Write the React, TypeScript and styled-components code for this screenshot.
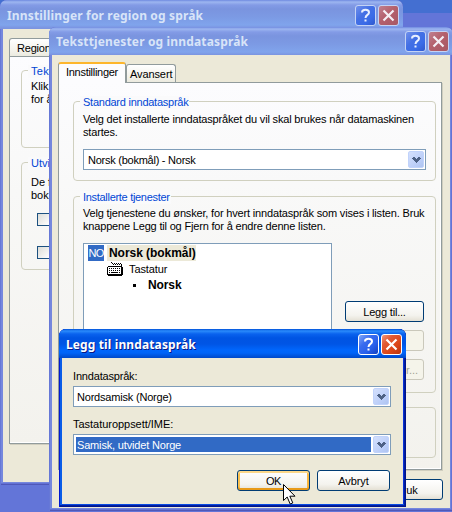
import React from "react";
import styled, { createGlobalStyle, css } from "styled-components";

const GlobalStyle = createGlobalStyle`
  *, *::before, *::after { box-sizing: border-box; }
  html, body { margin: 0; padding: 0; overflow: hidden; }
  body { font: 11px/13px "Liberation Sans", Arial, sans-serif; color: #000; }
`;

const Desktop = styled.main`
  position: relative;
  width: 452px;
  height: 512px;
  overflow: hidden;
  background: linear-gradient(#446fd1 0 13px, #6375d8 13px);
`;

/* Windows float freely over the desktop. */
const Frame = styled.section<{ $x: number; $y: number; $w: number; $h: number; $active?: boolean }>`
  position: absolute;
  left: ${(p) => p.$x}px;
  top: ${(p) => p.$y}px;
  width: ${(p) => p.$w}px;
  height: ${(p) => p.$h}px;
  display: flex;
  flex-direction: column;
  padding: 0 3px 3px;
  border-radius: 7px 7px 0 0;
  overflow: hidden;
  ${(p) =>
    p.$active
      ? css`
          background: #0831d9;
          box-shadow: inset 1px 0 #0019cf, inset -1px 0 #00138c, inset 0 -1px #00138c,
            inset -2px 0 #001ea0, inset 0 -2px #001ea0, inset 3px 0 #0a5ce8, inset 0 -3px #0a4ae0;
        `
      : css`
          background: #7587dd;
          box-shadow: inset 1px 0 #6678d6, inset -1px 0 #5058b8, inset 0 -1px #5058b8,
            inset -2px 0 #6472d4, inset 0 -2px #6472d4;
        `}
`;

const TitleBar = styled.header<{ $active?: boolean; $h: number; $top: number }>`
  flex: none;
  height: ${(p) => p.$h}px;
  margin: 0 -3px;
  padding: ${(p) => p.$top}px 4px 0 7px;
  display: flex;
  align-items: flex-start;
  gap: 2px;
  background: ${(p) =>
    p.$active
      ? "linear-gradient(#0050d8 0, #2a8bfb 2px, #0a62ee 5px, #0054e3 9px, #0055e5 15px, #0066fc 21px, #0064f8 24px, #0048c8 29px)"
      : "linear-gradient(#6f8ae0 0, #9db6f0 2px, #839be6 5px, #7a94df 9px, #7c9ae4 17px, #80a4ec 25px, #7b94e0 28px)"};
`;

const Title = styled.h1<{ $active?: boolean; $ls: number }>`
  flex: 1;
  margin: 0;
  font: bold 12px/22px "Noto Sans", "Open Sans", sans-serif;
  letter-spacing: ${(p) => p.$ls}px;
  white-space: nowrap;
  color: ${(p) => (p.$active ? "#fff" : "#d8e4f8")};
  text-shadow: ${(p) => (p.$active ? "1px 1px #0a1883" : "none")};
`;

const TitleButton = styled.button<{ $active?: boolean; $close?: boolean }>`
  width: 21px;
  height: 21px;
  padding: 0;
  display: grid;
  place-items: center;
  border: 1px solid ${(p) => (p.$active ? "#fff" : "#c4d3f5")};
  border-radius: 3px;
  background: ${(p) =>
    p.$close
      ? p.$active
        ? "linear-gradient(135deg, #f0987c 0, #e25a34 30%, #dc4618 65%, #b83410 100%)"
        : "linear-gradient(135deg, #c08090 0, #b4606c 45%, #a85864 100%)"
      : p.$active
        ? "linear-gradient(135deg, #80a8f8 0, #3a6cee 35%, #2860ec 65%, #1440c0 100%)"
        : "linear-gradient(135deg, #7090ec 0, #4470e4 40%, #3a6ce8 70%, #3058cc 100%)"};
  svg { display: block; }
`;

const Body = styled.div<{ $pad: string }>`
  flex: 1;
  min-height: 0;
  display: flex;
  flex-direction: column;
  background: #ece9d8;
  padding: ${(p) => p.$pad};
`;

const Tabs = styled.nav`
  display: flex;
  align-items: flex-end;
  height: 20px;
`;

const Tab = styled.div<{ $selected?: boolean; $w: number; $ls?: number }>`
  width: ${(p) => p.$w}px;
  height: 18px;
  padding-left: ${(p) => (p.$selected ? 7 : p.$w > 60 ? 7 : 3)}px;
  border: 1px solid #919b9c;
  border-bottom: 0;
  border-radius: 3px 3px 0 0;
  background: linear-gradient(#fff, #f3f2ea 70%, #ebeadf);
  line-height: 18px;
  white-space: nowrap;
  letter-spacing: ${(p) => p.$ls ?? 0}px;
  ${(p) =>
    p.$selected &&
    css`
      height: 21px;
      margin-bottom: -1px;
      border-top: 2px solid #fdb62c;
      background: #fcfcfe;
      line-height: 17px;
      z-index: 1;
    `}
`;

const Panel = styled.div<{ $h: number; $pad: string }>`
  height: ${(p) => p.$h}px;
  border: 1px solid #919b9c;
  box-shadow: 1px 1px #d0cebf, inset -1px -1px #fff;
  background: linear-gradient(#fcfcfe, #f8f8f7 35%, #f3f2ed);
  padding: ${(p) => p.$pad};
`;

const Group = styled.fieldset<{ $h: number; $mb: number }>`
  min-width: 0;
  height: ${(p) => p.$h}px;
  margin: 0 0 ${(p) => p.$mb}px;
  padding: 0 9px;
  border: 1px solid #d0d0bf;
  border-radius: 4px;
`;

const Caption = styled.div<{ $w: number; $ls: number }>`
  width: ${(p) => p.$w}px;
  height: 13px;
  margin: -6px 0 0 -3px;
  padding-left: 3px;
  background: #fafafb;
  color: #0046d5;
  white-space: nowrap;
  letter-spacing: ${(p) => p.$ls}px;
`;

const Line = styled.div<{ $ls: number }>`
  height: 13px;
  white-space: nowrap;
  letter-spacing: ${(p) => p.$ls}px;
`;

const Lines = styled.div<{ $mt: number; $mb: number }>`
  margin: ${(p) => p.$mt}px 0 ${(p) => p.$mb}px;
`;

const Checkbox = styled.div<{ $mb: number }>`
  width: 13px;
  height: 13px;
  margin: 0 0 ${(p) => p.$mb}px 6px;
  border: 1px solid #1c5180;
  background: linear-gradient(135deg, #dcdcd7, #fff);
`;

const Select = styled.div`
  height: 21px;
  padding: 2px 1px 2px 2px;
  display: flex;
  gap: 2px;
  border: 1px solid #7f9db9;
  background: #fff;
`;

const Value = styled.span<{ $selected?: boolean; $ls: number; $indent?: number }>`
  flex: 1;
  height: 15px;
  padding-left: ${(p) => p.$indent ?? 1}px;
  line-height: 16px;
  white-space: nowrap;
  letter-spacing: ${(p) => p.$ls}px;
  color: ${(p) => (p.$selected ? "#fff" : "#000")};
  background: ${(p) => (p.$selected ? "#316ac5" : "transparent")};
`;

const ArrowBox = styled.span`
  width: 16px;
  height: 17px;
  margin-top: -1px;
  display: grid;
  place-items: center;
  border: 1px solid #c1d3fb;
  border-radius: 2px;
  background: linear-gradient(135deg, #d4e0fd, #bacdf8 70%, #aec4f0);
`;

const ServiceRow = styled.div`
  display: flex;
  gap: 13px;
`;

const ListBox = styled.div`
  width: 249px;
  height: 100px;
  padding: 1px 4px;
  border: 1px solid #7f9db9;
  background: #fff;
`;

const ListItem = styled.div<{ $indent: number; $gap: number }>`
  height: 16px;
  display: flex;
  align-items: center;
  gap: ${(p) => p.$gap}px;
  padding-left: ${(p) => p.$indent}px;
`;

const LangBadge = styled.span`
  width: 16px;
  height: 16px;
  line-height: 17px;
  text-align: center;
  letter-spacing: -0.8px;
  color: #fff;
  background: #316ac5;
`;

const ItemText = styled.span<{ $bold?: boolean; $lit?: boolean; $ls: number }>`
  height: 16px;
  line-height: 17px;
  white-space: nowrap;
  font-size: ${(p) => (p.$bold ? 12 : 11)}px;
  font-weight: ${(p) => (p.$bold ? "bold" : "normal")};
  letter-spacing: ${(p) => p.$ls}px;
  ${(p) => p.$lit && css`width: 89px; padding-left: 2px; background: #ece9d8;`}
`;

const Bullet = styled.span`
  width: 3px;
  height: 3px;
  background: #000;
`;

const ButtonColumn = styled.div`
  width: 79px;
  padding-top: 58px;
  display: flex;
  flex-direction: column;
  gap: 8px;
`;

const Button = styled.button<{ $w: number; $hot?: boolean; $ls?: number }>`
  width: ${(p) => p.$w}px;
  height: 21px;
  padding: 0;
  border: 1px solid #003c74;
  border-radius: 3px;
  background: linear-gradient(#fff, #f4f3ee 70%, #e4e0d4);
  box-shadow: ${(p) => (p.$hot ? "inset 0 2px #fcd88a, inset 0 -2px #e89a18, inset 2px 0 #f9c050, inset -2px 0 #f9b840" : "none")};
  font: inherit;
  line-height: 18px;
  letter-spacing: ${(p) => p.$ls ?? 0}px;
  color: #000;
  &:disabled {
    border-color: #cac8bb;
    background: #f5f4ea;
    color: #a1a192;
  }
`;

const Footer = styled.div<{ $mt: number; $right: number }>`
  margin: ${(p) => p.$mt}px ${(p) => p.$right}px 0 0;
  display: flex;
  justify-content: flex-end;
  gap: 7px;
`;

const Pointer = styled.svg`
  position: absolute;
  left: 283px;
  top: 484px;
`;

const Chevron = () => (
  <ArrowBox>
    <svg width="9" height="6" viewBox="0 0 9 6" shapeRendering="crispEdges">
      <path fill="#4d6185" d="M1 0h2v1h1v1h1V1h1V0h2v1h1v1H8v1H7v1H6v1H5v1H4V5H3V4H2V3H1V2H0V1h1z" />
    </svg>
  </ArrowBox>
);

const Keyboard = () => (
  <svg width="16" height="14" viewBox="0 0 16 14" shapeRendering="crispEdges">
    <path fill="#000" d="M4 0h1v1H4zM5 1h1v1H5zM6 2h1v1H6zM7 1h1v1H7zM8 2h1v1H8zM9 1h1v1H9zM10 2h1v1h-1zM11 1h1v1h-1zM12 2h1v1h-1zM13 1h1v1h-1zM14 2h1v2h-1z" />
    <path fill="#000" d="M1 4h14v1h1v8h-1v1H1v-1H0V5h1z" />
    <path fill="#fff" d="M1 5h13v7H1z" />
    <path fill="#000" d="M2 6h1v1H2zM4 6h1v1H4zM6 6h1v1H6zM8 6h1v1H8zM10 6h1v1h-1zM12 6h1v1h-1zM2 8h1v1H2zM4 8h1v1H4zM6 8h1v1H6zM8 8h1v1H8zM10 8h1v1h-1zM12 8h1v1h-1zM2 10h1v1H2zM4 10h7v1H4zM12 10h1v1h-1z" />
  </svg>
);

function Chrome({ title, ls, active, height, top }: { title: string; ls: number; active?: boolean; height: number; top: number }) {
  return (
    <TitleBar $active={active} $h={height} $top={top}>
      <Title $active={active} $ls={ls}>{title}</Title>
      <TitleButton $active={active} aria-label="Hjelp">
        <svg width="13" height="15" viewBox="0 0 13 15" fill="none" stroke={active ? "#fff" : "#e8efff"} strokeWidth="2">
          <path d="M3 4.500C3 .8 10 .8 10 4.500 10 7 6.500 6.800 6.500 10M6.500 11.500v2" />
        </svg>
      </TitleButton>
      <TitleButton $active={active} $close aria-label="Lukk">
        <svg width="13" height="13" viewBox="0 0 13 13" stroke={active ? "#fff" : "#f4eef4"} strokeWidth="2.200">
          <path d="M1.500 1.500l10 10M11.500 1.500l-10 10" />
        </svg>
      </TitleButton>
    </TitleBar>
  );
}

export default function App() {
  return (
    <>
      <GlobalStyle />
      <Desktop>
        <Frame $x={0} $y={0} $w={403} $h={485}>
          <Chrome title="Innstillinger for region og språk" ls={0.16} height={29} top={5} />
          <Body $pad="7px 6px 0">
            <Tabs><Tab $w={90} $ls={-0.2}>Region</Tab></Tabs>
            <Panel $h={388} $pad="13px 11px">
              <Group $h={78} $mb={14}>
                <Caption $w={60} $ls={0.3}>Tek</Caption>
                <Lines $mt={2} $mb={0}>
                  <Line $ls={-0.1}>Klik</Line>
                  <Line $ls={-0.1}>for å</Line>
                </Lines>
              </Group>
              <Group $h={108} $mb={0}>
                <Caption $w={60} $ls={0}>Utvi</Caption>
                <Lines $mt={6} $mb={11}>
                  <Line $ls={0}>De f</Line>
                  <Line $ls={0}>bok</Line>
                </Lines>
                <Checkbox $mb={20} />
                <Checkbox $mb={0} />
              </Group>
            </Panel>
          </Body>
        </Frame>

        <Frame $x={49} $y={27} $w={404} $h={484}>
          <Chrome title="Teksttjenester og inndataspråk" ls={0.15} height={28} top={4} />
          <Body $pad="7px 8px 0 6px">
            <Tabs>
              <Tab $selected $w={68} $ls={-0.28}>Innstillinger</Tab>
              <Tab $w={50} $ls={-0.1}>Avansert</Tab>
            </Tabs>
            <Panel $h={388} $pad="18px 5px 0 14px">
              <Group $h={80} $mb={15}>
                <Caption $w={109} $ls={-0.25}>Standard inndataspråk</Caption>
                <Lines $mt={4} $mb={10}>
                  <Line $ls={-0.17}>Velg det installerte inndataspråket du vil skal brukes når datamaskinen</Line>
                  <Line $ls={-0.17}>startes.</Line>
                </Lines>
                <Select><Value $ls={-0.25} $indent={2}>Norsk (bokmål) - Norsk</Value><Chevron /></Select>
              </Group>
              <Group $h={197} $mb={14}>
                <Caption $w={91} $ls={-0.3}>Installerte tjenester</Caption>
                <Lines $mt={3} $mb={10}>
                  <Line $ls={-0.17}>Velg tjenestene du ønsker, for hvert inndataspråk som vises i listen. Bruk</Line>
                  <Line $ls={-0.18}>knappene Legg til og Fjern for å endre denne listen.</Line>
                </Lines>
                <ServiceRow>
                  <ListBox>
                    <ListItem $indent={0} $gap={3}>
                      <LangBadge>NO</LangBadge>
                      <ItemText $bold $lit $ls={-0.05}>Norsk (bokmål)</ItemText>
                    </ListItem>
                    <ListItem $indent={19} $gap={6}>
                      <Keyboard />
                      <ItemText $ls={-0.1}>Tastatur</ItemText>
                    </ListItem>
                    <ListItem $indent={45} $gap={12}>
                      <Bullet />
                      <ItemText $bold $ls={-0.1}>Norsk</ItemText>
                    </ListItem>
                  </ListBox>
                  <ButtonColumn>
                    <Button $w={79} $ls={-0.2}>Legg til...</Button>
                    <Button $w={79} disabled>Fjern</Button>
                    <Button $w={79} disabled>Egenskaper...</Button>
                  </ButtonColumn>
                </ServiceRow>
              </Group>
              <Group $h={51} $mb={0} />
            </Panel>
            <Footer $mt={9} $right={-1}><Button $w={73}>Bruk</Button></Footer>
          </Body>
        </Frame>

        <Frame $active $x={59} $y={329} $w={347} $h={178}>
          <Chrome active title="Legg til inndataspråk" ls={0.12} height={29} top={5} />
          <Body $pad="12px 12px 0 11px">
            <Line $ls={-0.18}>Inndataspråk:</Line>
            <Lines $mt={3} $mb={11}>
              <Select><Value $ls={-0.2}>Nordsamisk (Norge)</Value><Chevron /></Select>
            </Lines>
            <Line $ls={-0.03}>Tastaturoppsett/IME:</Line>
            <Lines $mt={3} $mb={0}>
              <Select><Value $selected $ls={-0.17}>Samisk, utvidet Norge</Value><Chevron /></Select>
            </Lines>
            <Footer $mt={15} $right={1}>
              <Button $w={73} $hot $ls={-0.5}>OK</Button>
              <Button $w={73} $ls={-0.1}>Avbryt</Button>
            </Footer>
          </Body>
        </Frame>

        <Pointer width="13" height="21" viewBox="0 0 13 21">
          <path fill="#fff" stroke="#000" d="M.5.5v16l3.700-3.500 3 7 2.600-1.100-3-6.700H12z" />
        </Pointer>
      </Desktop>
    </>
  );
}
